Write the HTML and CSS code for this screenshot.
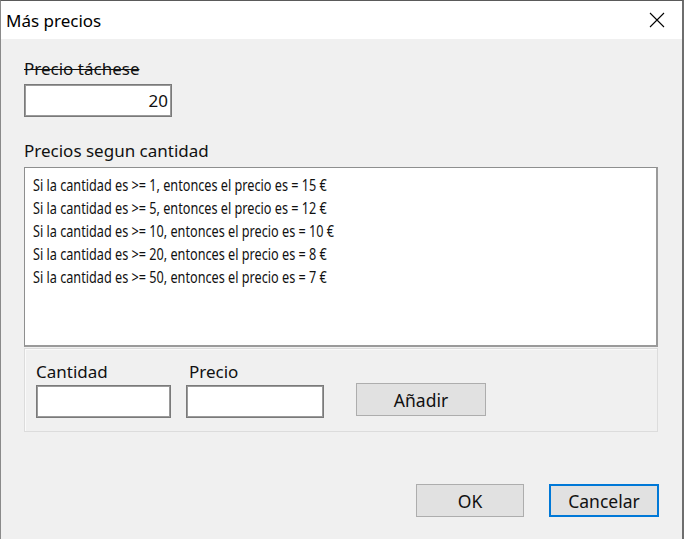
FILE: index.html
```html
<!DOCTYPE html>
<html lang="es">
<head>
<meta charset="utf-8">
<title>Más precios</title>
<link rel="stylesheet" href="styles.css">
</head>
<body>
<div class="window">
  <div class="titlebar">
    <span class="title">Más precios</span>
    <span class="close" aria-label="Cerrar">
      <svg width="16" height="16" viewBox="0 0 16 16"><path d="M1 1 L15 15 M15 1 L1 15" stroke="#000" stroke-width="1.1" fill="none"/></svg>
    </span>
  </div>
  <div class="content">
    <div class="label strike">Precio táchese</div>
    <div class="input tachado">20</div>
    <div class="label section">Precios segun cantidad</div>
    <ul class="listbox">
      <li>Si la cantidad es &gt;= 1, entonces el precio es = 15 €</li>
      <li>Si la cantidad es &gt;= 5, entonces el precio es = 12 €</li>
      <li>Si la cantidad es &gt;= 10, entonces el precio es = 10 €</li>
      <li>Si la cantidad es &gt;= 20, entonces el precio es = 8 €</li>
      <li>Si la cantidad es &gt;= 50, entonces el precio es = 7 €</li>
    </ul>
    <div class="group">
      <div class="field f-cant">
        <div class="label">Cantidad</div>
        <div class="input small"></div>
      </div>
      <div class="field f-prec">
        <div class="label">Precio</div>
        <div class="input small"></div>
      </div>
      <button class="btn add">Añadir</button>
    </div>
    <div class="actions">
      <button class="btn ok">OK</button>
      <button class="btn cancel">Cancelar</button>
    </div>
  </div>
</div>
</body>
</html>
```

FILE: styles.css
```css
* { box-sizing: border-box; }
html, body { margin: 0; padding: 0; }
body {
  width: 684px;
  height: 539px;
  overflow: hidden;
  background: #f0f0f0;
  font-family: "Noto Sans", "Open Sans", sans-serif;
  color: #111;
}
.window {
  width: 684px;
  height: 539px;
  background: #f0f0f0;
  border-left: 1px solid #8a8a8a;
  border-right: 2px solid #6e6e6e;
  border-top: 1px solid #5a5a5a;
}
.titlebar {
  height: 38px;
  background: #fff;
  display: flex;
  align-items: center;
  justify-content: space-between;
  padding: 0 17px 0 5px;
}
.title {
  font-size: 17px;
  color: #000;
}
.close { display: flex; width: 16px; height: 16px; }
.content {
  padding: 20px 24px 0 23px;
}
.label {
  font-size: 17px;
  line-height: 20px;
  height: 20px;
  white-space: nowrap;
}
.strike { text-decoration: line-through; text-decoration-thickness: 1px; }
.input {
  background: #fff;
  border: 1px solid #7a7a7a;
  box-shadow: inset 0 0 0 1px #9a9a9a;
  height: 33px;
  margin-top: 5px;
}
.tachado {
  width: 148px;
  text-align: right;
  font-size: 17px;
  line-height: 31px;
  padding-right: 3px;
}
.section { margin-top: 24px; }
.listbox {
  list-style: none;
  margin: 6px 0 0 0;
  padding: 5px 8px 3px;
  height: 180px;
  background: #fff;
  border-style: solid;
  border-width: 1px 2px 2px 1px;
  border-color: #8e8f8f #9a9a9a #9a9a9a #8e8f8f;
  overflow: hidden;
}
.listbox li {
  font-size: 17px;
  line-height: 23px;
  height: 23px;
  white-space: nowrap;
  transform: scaleX(0.745);
  transform-origin: left center;
}
.group {
  margin-top: 1px;
  height: 84px;
  border: 1px solid #dcdcdc;
  box-shadow: inset 1px 1px 0 #fafafa;
  display: flex;
  align-items: flex-start;
  padding: 13px 0 0 11px;
}
.f-cant .input { width: 135px; }
.f-prec { margin-left: 15px; }
.f-prec .label { padding-left: 3px; }
.f-prec .input { width: 138px; }
.input.small { margin-top: 3px; }
.btn {
  font-family: inherit;
  font-size: 17.5px;
  color: #111;
  background: #e1e1e1;
  border: 1px solid #adadad;
  height: 33px;
  padding: 0;
  margin: 0;
}
.add {
  width: 130px;
  margin-left: 32px;
  margin-top: 21px;
}
.actions {
  display: flex;
  justify-content: flex-end;
  gap: 25px;
  margin-top: 52px;
  margin-right: -1px;
}
.ok { width: 108px; }
.cancel {
  width: 110px;
  border: 2px solid #0078d7;
}
```
